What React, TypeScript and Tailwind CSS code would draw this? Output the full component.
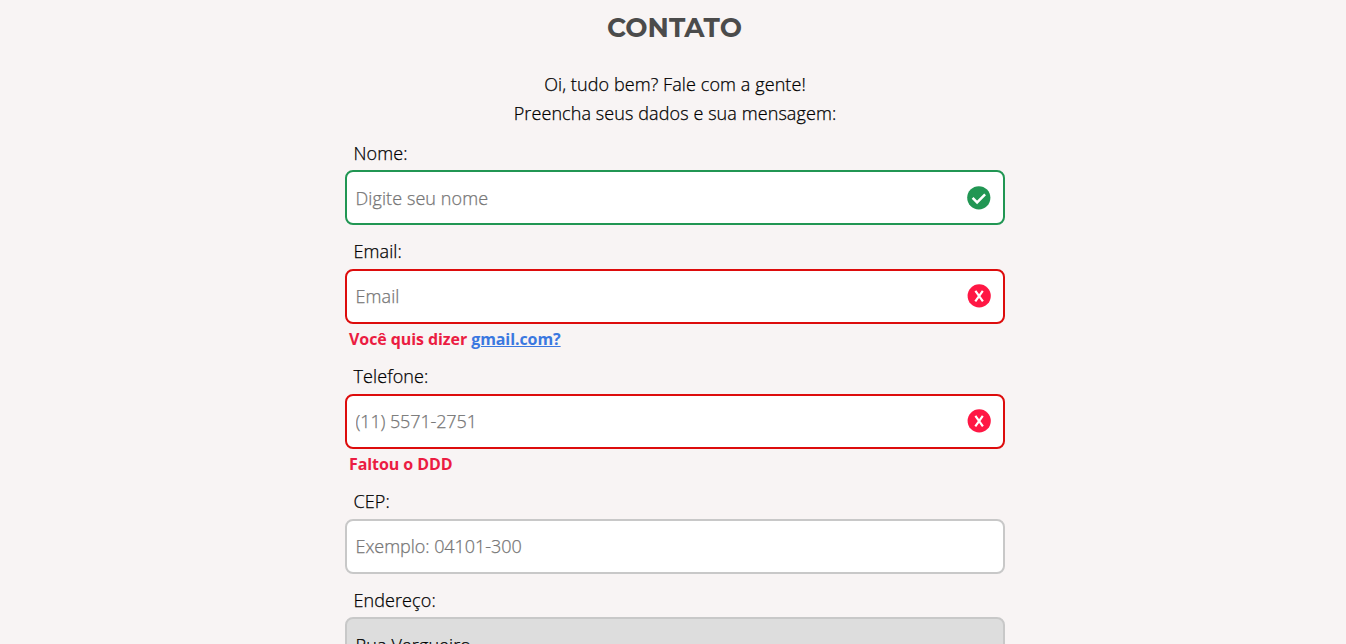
import type { ReactNode } from "react";

type Status = "ok" | "error" | "idle";

function StatusIcon({ status }: { status: Status }) {
  if (status === "idle") return null;
  if (status === "ok") {
    return (
      <svg viewBox="0 0 24 24" className="size-6 shrink-0" fill="none">
        <circle cx="11.8" cy="11.8" r="11.6" fill="#219653" />
        <path d="M5.6 11.9l4.5 4.5 8-8" stroke="#fff" strokeWidth="2.5" />
      </svg>
    );
  }
  return (
    <svg viewBox="0 0 24 24" className="size-6 shrink-0" fill="none">
      <circle cx="12.2" cy="11.9" r="11.6" fill="#ff1744" />
      <path d="M8.4 6.9l7.5 10.4M15.8 6.9l-7.5 10.4" stroke="#fff" strokeWidth="2.2" />
    </svg>
  );
}

const borders: Record<Status, string> = {
  ok: "border-[#219653]",
  error: "border-[#dd0c0c]",
  idle: "border-[#c8c8c8]",
};

function Field({ label, placeholder, value, status = "idle", tracking = "tracking-[0.09px]", children }: {
  label: string;
  placeholder?: string;
  value?: string;
  status?: Status;
  tracking?: string;
  children?: ReactNode;
}) {
  return (
    <div>
      <label className="block h-[30.4px] pl-[8.5px] text-[18px] leading-[27px] font-light tracking-[0.09px] [-webkit-text-stroke:0.25px]">{label}</label>
      <div className={`flex h-[55px] items-center rounded-lg border-2 pr-3 pl-[8.5px] ${borders[status]} ${value ? "bg-[#dddddd]" : "bg-white"}`}>
        <input
          aria-label={label}
          className={`min-w-0 flex-1 bg-transparent pt-px text-[18px] font-light outline-none [-webkit-text-stroke:0.25px] placeholder:text-[#757575] ${tracking}`}
          placeholder={placeholder}
          defaultValue={value}
          readOnly={Boolean(value)}
        />
        <StatusIcon status={status} />
      </div>
      {children && <p className="h-[26.6px] pt-[3px] pl-1 text-[16px] leading-6 font-bold tracking-[-0.08px] text-[#eb1c42]">{children}</p>}
    </div>
  );
}

export default function App() {
  return (
    <main className="h-[644px] overflow-hidden bg-[#f8f4f4] font-['Open_Sans',sans-serif] text-black">
      <div className="mx-auto flex w-[660px] translate-x-[2px] flex-col pt-3">
        <h1 className="pr-px text-center font-['Montserrat','Inter',sans-serif] text-[26.4px] leading-8 font-bold text-[#4b4b4b]">CONTATO</h1>
        <p className="mt-[26px] text-center text-[18px] leading-[29px] font-light tracking-[0.09px] [-webkit-text-stroke:0.25px]">
          Oi, tudo bem? Fale com a gente!
          <br />
          Preencha seus dados e sua mensagem:
        </p>
        <form className="mt-3 flex flex-col gap-[13px]">
          <Field label="Nome:" placeholder="Digite seu nome" status="ok" />
          <Field label="Email:" placeholder="Email" status="error">
            Você quis dizer <a href="#" className="text-[#3b78e0] underline">gmail.com?</a>
          </Field>
          <Field label="Telefone:" placeholder="(11) 5571-2751" status="error" tracking="tracking-[-0.12px]">Faltou o DDD</Field>
          <Field label="CEP:" placeholder="Exemplo: 04101-300" tracking="tracking-[-0.04px]" />
          <Field label="Endereço:" value="Rua Vergueiro" />
        </form>
      </div>
    </main>
  );
}
